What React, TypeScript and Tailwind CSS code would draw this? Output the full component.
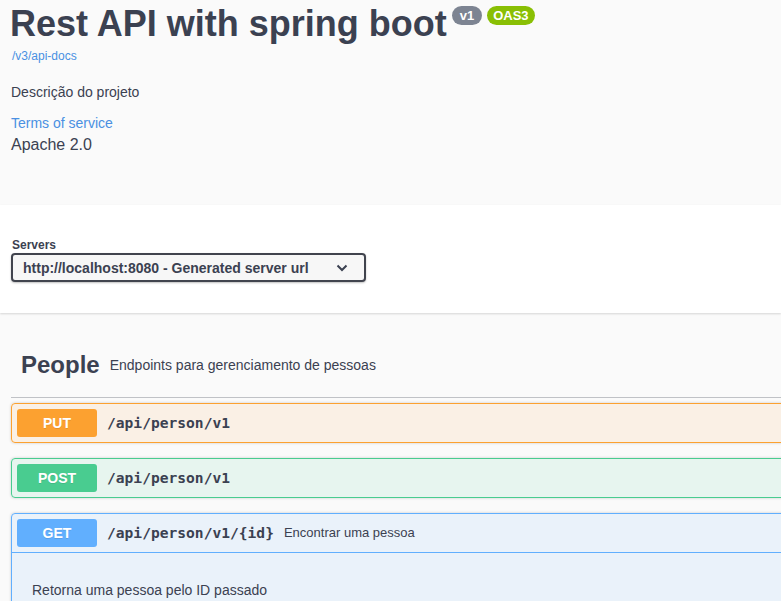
const font = { fontFamily: '"Liberation Sans", Arial, sans-serif' }

type Op = {
  method: string
  path: string
  summary?: string
  border: string
  bg: string
  badge: string
}

const ops: Op[] = [
  { method: 'PUT', path: '/api/person/v1', border: 'border-[#fca130]', bg: 'bg-[#fca130]/10', badge: 'bg-[#fca130]' },
  { method: 'POST', path: '/api/person/v1', border: 'border-[#49cc90]', bg: 'bg-[#49cc90]/10', badge: 'bg-[#49cc90]' },
]

function Summary({ op }: { op: Op }) {
  return (
    <div className="flex h-[38px] items-center px-[5px]">
      <span
        className={`${op.badge} flex h-7 w-20 items-center justify-center rounded-[3px] text-sm font-bold text-white [text-shadow:0_1px_0_rgba(0,0,0,0.1)]`}
      >
        {op.method}
      </span>
      <span className="px-2.5 font-['DejaVu_Sans_Mono',monospace] text-[14.6px] font-bold text-[#3b4151]">
        {op.path}
      </span>
      {op.summary && <span className="text-[13px] text-[#3b4151]">{op.summary}</span>}
    </div>
  )
}

export default function App() {
  return (
    <div className="min-h-[601px] w-full overflow-hidden bg-[#fafafa] text-[#3b4151]" style={font}>
      {/* info */}
      <div className="h-[205px] pl-2.5 pt-1.5">
        <div className="flex items-start">
          <h1 className="text-[36px] font-bold leading-[36px]">Rest API with spring boot</h1>
          <span className="ml-[5px] flex h-[19px] items-center rounded-full bg-[#7d8492] px-2 text-[13px] font-bold text-white">
            v1
          </span>
          <span className="ml-[5px] flex h-[19px] items-center rounded-full bg-[#89bf04] px-[6px] text-[13px] font-bold text-white">
            OAS3
          </span>
        </div>
        <div className="mt-[6px] pl-[2px] text-[12px] leading-4 text-[#4990e2]">/v3/api-docs</div>
        <div className="mt-[18px] pl-[1px] text-sm leading-5">Descrição do projeto</div>
        <div className="mt-[11px] pl-[1px] text-sm leading-5 text-[#4990e2]">Terms of service</div>
        <div className="mt-[2px] pl-[1px] text-base leading-5">Apache 2.0</div>
      </div>

      {/* servers */}
      <div className="h-[108px] bg-white pl-[11px] pt-8 shadow-[0_1px_2px_0_rgba(0,0,0,0.15)]">
        <div className="pl-[1px] text-[12px] font-bold leading-4">Servers</div>
        <div className="flex h-[29px] w-[355px] items-center justify-between rounded border-2 border-[#41444e] bg-[#f7f7f7] pl-2.5 pr-4 text-sm font-bold shadow-[0_1px_2px_0_rgba(0,0,0,0.25)]">
          <span>http://localhost:8080 - Generated server url</span>
          <svg width="12" height="8" viewBox="0 0 12 8">
            <polyline points="1.5,1.5 6,6 10.5,1.5" fill="none" stroke="#3b4151" strokeWidth="2" />
          </svg>
        </div>
      </div>

      {/* tag */}
      <div className="w-[1000px] pl-[11px] pt-[37px]">
        <div className="border-b border-[#3b4151]/30 pb-[17px] pl-2.5">
          <div className="flex h-[30px] items-center">
            <span className="text-2xl font-bold leading-[30px]">People</span>
            <span className="ml-2.5 text-sm">Endpoints para gerenciamento de pessoas</span>
          </div>
        </div>

        <div className="mt-[5px] flex flex-col gap-[15px]">
          {ops.map((op) => (
            <div
              key={op.method}
              className={`rounded border ${op.border} ${op.bg} shadow-[0_0_3px_rgba(0,0,0,0.19)]`}
            >
              <Summary op={op} />
            </div>
          ))}
          <div className="rounded border border-[#61affe] bg-[#61affe]/10 shadow-[0_0_3px_rgba(0,0,0,0.19)]">
            <div className="border-b border-[#61affe]">
              <Summary
                op={{
                  method: 'GET',
                  path: '/api/person/v1/{id}',
                  summary: 'Encontrar uma pessoa',
                  border: '',
                  bg: '',
                  badge: 'bg-[#61affe]',
                }}
              />
            </div>
            <div className="h-[120px] pl-5 pt-[27px] text-sm leading-5">Retorna uma pessoa pelo ID passado</div>
          </div>
        </div>
      </div>
    </div>
  )
}
